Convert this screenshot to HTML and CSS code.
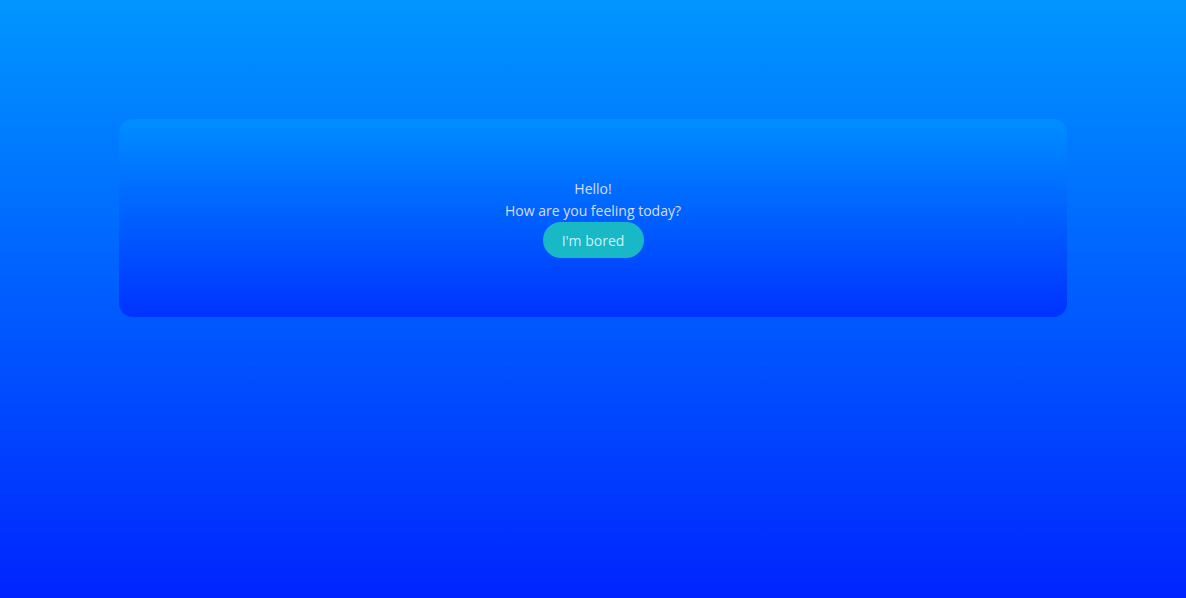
FILE: index.html
```html
<!DOCTYPE html>
<html lang="en">
<head>
<meta charset="utf-8">
<title>Mood</title>
<link rel="stylesheet" href="styles.css">
</head>
<body>
<main class="page">
  <section class="card">
    <p class="line">Hello!</p>
    <p class="line">How are you feeling today?</p>
    <button class="btn">I'm bored</button>
  </section>
</main>
</body>
</html>
```
FILE: styles.css
```css
html, body {
  margin: 0;
  height: 100%;
}
body {
  background: linear-gradient(180deg, #0096ff 0%, #0024ff 100%);
  font-family: "Open Sans", "Noto Sans", sans-serif;
  color: #d6ddff;
}
.page {
  height: 100%;
  padding-top: 119px;
  box-sizing: border-box;
  display: flex;
  flex-direction: column;
  align-items: center;
}
.card {
  width: 948px;
  height: 198px;
  border-radius: 14px;
  background: linear-gradient(180deg, #008eff 0%, #0032ff 100%);
  display: flex;
  flex-direction: column;
  align-items: center;
  justify-content: center;
}
.line {
  margin: 0;
  font-size: 14px;
  line-height: 22px;
}
.btn {
  margin-top: 0;
  width: 101px;
  height: 36px;
  border: none;
  border-radius: 18px;
  background: #18b8c6;
  color: #cdeff6;
  font-family: "Open Sans", "Noto Sans", sans-serif;
  font-size: 14px;
  padding: 0;
  cursor: pointer;
}
```
